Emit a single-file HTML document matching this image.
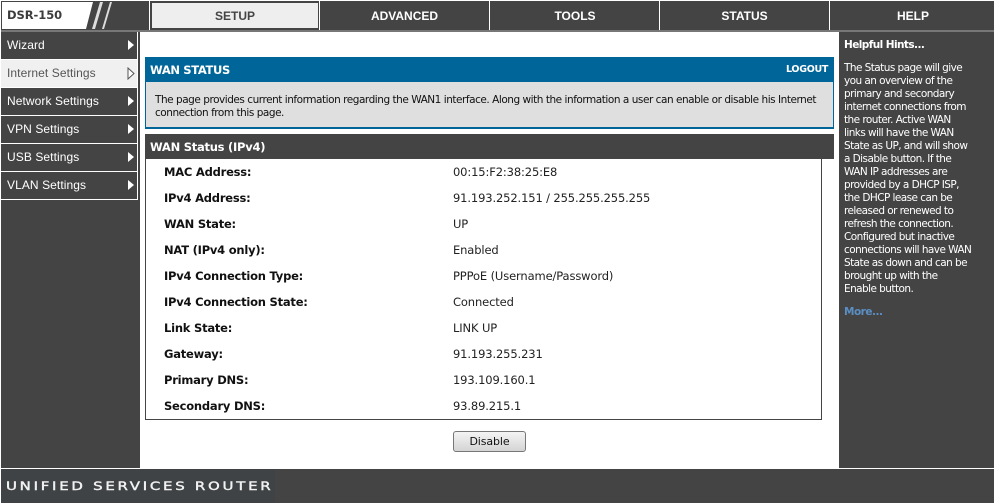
<!DOCTYPE html>
<html><head><meta charset="utf-8">
<style>
html,body{margin:0;padding:0}
body{width:994px;height:503px;position:relative;overflow:hidden;background:#fff;font-family:"DejaVu Sans","Liberation Sans",sans-serif;font-size:11px;color:#111}
div{position:absolute;white-space:nowrap}
.d{background:#444}
.tab{top:1px;height:29px;line-height:31px;text-align:center;font-weight:bold;color:#fff;background:#444;font-family:"Liberation Sans",sans-serif;font-size:12px}
.sep{top:1px;height:29px;width:1px;background:#fff}
.m{left:1px;width:136px;height:27px;background:#444;color:#fff;line-height:27px;padding:0}
.m span{position:absolute;left:6px;font-family:"Liberation Sans",sans-serif;font-size:12px;letter-spacing:.08px}
.m i{position:absolute;left:127px;top:8px;width:0;height:0;border-left:6px solid #fff;border-top:5px solid transparent;border-bottom:5px solid transparent}
.k{left:164px;font-weight:bold;font-size:11.5px;letter-spacing:-.22px;color:#111;height:14px;line-height:14px}
.v{left:453px;font-size:11.5px;letter-spacing:-.13px;color:#222;height:14px;line-height:14px}
.h{left:844px;color:#fff;font-size:10.5px;letter-spacing:-.56px;line-height:13px;height:13px}
</style></head>
<body>
<div class="d" style="left:1px;top:1px;width:993px;height:29px"></div>
<div style="left:1px;top:30px;width:993px;height:2px;background:#777"></div>
<svg style="position:absolute;left:0;top:0" width="150" height="32">
<polygon points="2,2 93,2 86,29 2,29" fill="#fff"/>
<polygon points="100,2 103,2 95,29 92,29" fill="#ddd"/>
<polygon points="110,2 112,2 104,29 102,29" fill="#ddd"/>
</svg>
<div style="left:7px;top:8px;font-weight:bold;font-size:11.5px;letter-spacing:-.05px;color:#3c3c3c;line-height:15px">DSR-150</div>
<div class="sep" style="left:149px"></div>
<div class="tab" style="left:152px;top:3px;width:166px;height:25px;line-height:27px;background:#eee;color:#444">SETUP</div>
<div class="sep" style="left:319px"></div>
<div class="tab" style="left:320px;width:169px">ADVANCED</div>
<div class="sep" style="left:489px"></div>
<div class="tab" style="left:490px;width:170px">TOOLS</div>
<div class="sep" style="left:659px"></div>
<div class="tab" style="left:660px;width:169px">STATUS</div>
<div class="sep" style="left:829px"></div>
<div class="tab" style="left:832px;width:162px">HELP</div>

<div class="d" style="left:1px;top:32px;width:139px;height:436px"></div>
<div style="left:137px;top:32px;width:1px;height:168px;background:#fff"></div>
<div style="left:1px;top:199px;width:137px;height:1px;background:#fff"></div>
<div class="m" style="top:32px"><span>Wizard</span><i></i></div>
<div style="left:1px;top:59px;width:136px;height:1px;background:#fff"></div>
<div class="m" style="top:60px;background:#f0f0f0;color:#555"><span>Internet Settings</span>
<svg style="position:absolute;left:126px;top:7px" width="9" height="13"><polygon points="1,1 7,6.5 1,12" fill="#fff" stroke="#555"/></svg></div>
<div style="left:1px;top:87px;width:136px;height:1px;background:#fff"></div>
<div class="m" style="top:88px"><span>Network Settings</span><i></i></div>
<div style="left:1px;top:115px;width:136px;height:1px;background:#fff"></div>
<div class="m" style="top:116px"><span>VPN Settings</span><i></i></div>
<div style="left:1px;top:143px;width:136px;height:1px;background:#fff"></div>
<div class="m" style="top:144px"><span>USB Settings</span><i></i></div>
<div style="left:1px;top:171px;width:136px;height:1px;background:#fff"></div>
<div class="m" style="top:172px"><span>VLAN Settings</span><i></i></div>

<div style="left:145px;top:57px;width:689px;height:25px;background:#069"></div>
<div style="left:150px;top:62px;color:#fff;font-weight:bold;font-size:11.5px;letter-spacing:-.35px;line-height:16px">WAN STATUS</div>
<div style="left:786px;top:63px;color:#fff;font-weight:bold;font-size:9.5px;letter-spacing:-.3px;line-height:14px">LOGOUT</div>
<div style="left:145px;top:82px;width:687px;height:45px;background:#dfdfdf;border:1px solid #069;border-top:0;border-bottom-width:2px"></div>
<div style="left:155px;top:94px;font-size:10.5px;letter-spacing:-.465px;line-height:13px;color:#111;white-space:pre">The page provides current information regarding the WAN1 interface. Along with the information a user can enable or disable his Internet
connection from this page.</div>

<div class="d" style="left:145px;top:134px;width:689px;height:25px"></div>
<div style="left:150px;top:139px;color:#fff;font-weight:bold;font-size:11.5px;letter-spacing:-.25px;line-height:16px">WAN Status (IPv4)</div>
<div style="left:145px;top:159px;width:675px;height:260px;border:1px solid #444;border-top:0"></div>

<div class="k" style="top:165px">MAC Address:</div><div class="v" style="top:165px">00:15:F2:38:25:E8</div>
<div class="k" style="top:191px">IPv4 Address:</div><div class="v" style="top:191px">91.193.252.151 / 255.255.255.255</div>
<div class="k" style="top:217px">WAN State:</div><div class="v" style="top:217px">UP</div>
<div class="k" style="top:243px">NAT (IPv4 only):</div><div class="v" style="top:243px">Enabled</div>
<div class="k" style="top:269px">IPv4 Connection Type:</div><div class="v" style="top:269px">PPPoE (Username/Password)</div>
<div class="k" style="top:295px">IPv4 Connection State:</div><div class="v" style="top:295px">Connected</div>
<div class="k" style="top:321px">Link State:</div><div class="v" style="top:321px">LINK UP</div>
<div class="k" style="top:347px">Gateway:</div><div class="v" style="top:347px">91.193.255.231</div>
<div class="k" style="top:373px">Primary DNS:</div><div class="v" style="top:373px">193.109.160.1</div>
<div class="k" style="top:399px">Secondary DNS:</div><div class="v" style="top:399px">93.89.215.1</div>

<div style="left:453px;top:431px;width:71px;height:19px;border:1px solid #777;border-radius:3px;background:linear-gradient(#f4f4f4,#d4d4d4);text-align:center;line-height:20px;font-size:11px;letter-spacing:-.1px;color:#111">Disable</div>

<div class="d" style="left:839px;top:32px;width:155px;height:436px"></div>
<div class="h" style="top:39px;font-weight:bold;letter-spacing:-.57px">Helpful Hints...</div>
<div class="h" style="top:62px">The Status page will give</div>
<div class="h" style="top:75px">you an overview of the</div>
<div class="h" style="top:88px">primary and secondary</div>
<div class="h" style="top:101px">internet connections from</div>
<div class="h" style="top:114px">the router. Active WAN</div>
<div class="h" style="top:127px">links will have the WAN</div>
<div class="h" style="top:140px">State as UP, and will show</div>
<div class="h" style="top:153px">a Disable button. If the</div>
<div class="h" style="top:166px">WAN IP addresses are</div>
<div class="h" style="top:179px">provided by a DHCP ISP,</div>
<div class="h" style="top:192px">the DHCP lease can be</div>
<div class="h" style="top:205px">released or renewed to</div>
<div class="h" style="top:218px">refresh the connection.</div>
<div class="h" style="top:231px">Configured but inactive</div>
<div class="h" style="top:244px">connections will have WAN</div>
<div class="h" style="top:257px">State as down and can be</div>
<div class="h" style="top:270px">brought up with the</div>
<div class="h" style="top:283px">Enable button.</div>
<div class="h" style="top:306px;color:#5b8fc4;font-weight:bold;letter-spacing:-.5px">More...</div>

<div class="d" style="left:1px;top:469px;width:993px;height:34px"></div>
<div style="left:1px;top:469px;width:274px;height:34px;background:#3f4345"></div>
<div style="left:6px;top:478px;color:#f2f2f2;font-size:11.5px;-webkit-text-stroke:.4px #f2f2f2;letter-spacing:2.1px;line-height:16px;transform:scaleX(1.3);transform-origin:0 0">UNIFIED SERVICES ROUTER</div>
</body></html>
